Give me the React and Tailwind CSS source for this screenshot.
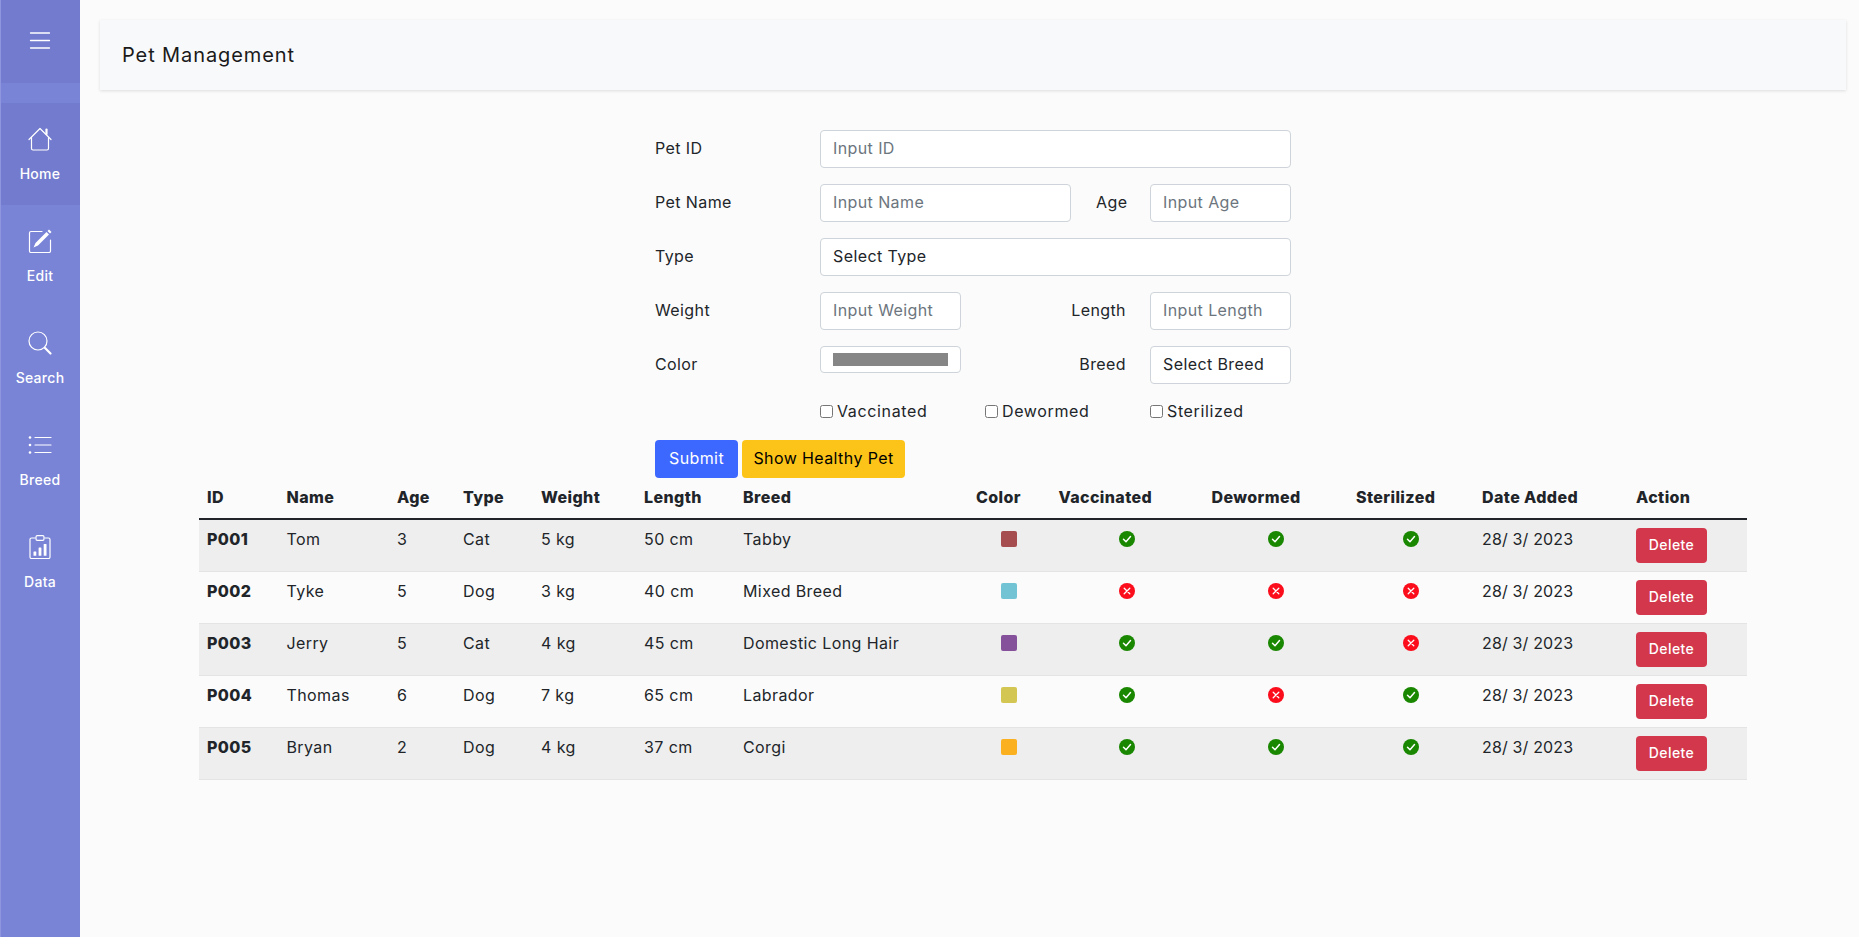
import React from "react";

const FONT = "font-['Inter','Liberation_Sans',sans-serif]";

const pets = [
  { id: "P001", name: "Tom", age: 3, type: "Cat", weight: "5 kg", length: "50 cm", breed: "Tabby", color: "bg-[#a64d4f]", v: true, d: true, s: true },
  { id: "P002", name: "Tyke", age: 5, type: "Dog", weight: "3 kg", length: "40 cm", breed: "Mixed Breed", color: "bg-[#72c4d4]", v: false, d: false, s: false },
  { id: "P003", name: "Jerry", age: 5, type: "Cat", weight: "4 kg", length: "45 cm", breed: "Domestic Long Hair", color: "bg-[#86519b]", v: true, d: true, s: false },
  { id: "P004", name: "Thomas", age: 6, type: "Dog", weight: "7 kg", length: "65 cm", breed: "Labrador", color: "bg-[#d4c653]", v: true, d: false, s: true },
  { id: "P005", name: "Bryan", age: 2, type: "Dog", weight: "4 kg", length: "37 cm", breed: "Corgi", color: "bg-[#fbb01f]", v: true, d: true, s: true },
];

const headers = ["ID", "Name", "Age", "Type", "Weight", "Length", "Breed", "Color", "Vaccinated", "Dewormed", "Sterilized", "Date Added", "Action"];
const colWidths = ["w-[79.5px]", "w-[110.5px]", "w-[66px]", "w-[78px]", "w-[103px]", "w-[99px]", "w-[233px]", "w-[82.5px]", "w-[153px]", "w-[144.5px]", "w-[126px]", "w-[154px]", "w-[119px]"];

function HomeIcon() {
  return (
    <svg viewBox="0 0 24 24" className="w-6 h-6" fill="none" stroke="white" strokeWidth="1.2" strokeLinejoin="round" strokeLinecap="round">
      <path d="M1 12.5 12 1.5 23 12.5" />
      <path d="M3.500 10.500v11a1.500 1.500 0 0 0 1.500 1.500h14a1.500 1.500 0 0 0 1.500-1.500v-11" />
      <path d="M18.500 7V2.500" strokeWidth="2.2" />
    </svg>
  );
}

function EditIcon() {
  return (
    <svg viewBox="0 0 24 24" className="w-6 h-6" fill="none" stroke="white" strokeWidth="1.2" strokeLinecap="round">
      <path d="M14 2.500H3A1.500 1.500 0 0 0 1.500 4v18A1.500 1.500 0 0 0 3 23.500h18a1.500 1.500 0 0 0 1.500-1.500V11" />
      <path d="M21 0.500 23.500 3 22 4.500 19.500 2Z" fill="white" stroke="none" />
      <path d="M18.500 3 21 5.500 10 16.500 5.500 18.500l2-4.500Z" fill="white" stroke="none" />
    </svg>
  );
}

function SearchIcon() {
  return (
    <svg viewBox="0 0 24 24" className="w-6 h-6" fill="none" stroke="white" strokeLinecap="round">
      <circle cx="10" cy="10" r="9" strokeWidth="1.2" />
      <path d="M16.800 16.800 22.500 22.500" strokeWidth="2.2" />
    </svg>
  );
}

function ListIcon() {
  return (
    <svg viewBox="0 0 24 24" className="w-6 h-6" fill="none" stroke="white" strokeWidth="1.2" strokeLinecap="round">
      <path d="M7 4.500h16M7 12h16M7 19.500h16" />
      <circle cx="2" cy="4.500" r="1.300" fill="white" stroke="none" />
      <circle cx="2" cy="12" r="1.300" fill="white" stroke="none" />
      <circle cx="2" cy="19.500" r="1.300" fill="white" stroke="none" />
    </svg>
  );
}

function DataIcon() {
  return (
    <svg viewBox="0 0 24 24" className="w-6 h-6" fill="none" stroke="white" strokeWidth="1.2" strokeLinejoin="round">
      <path d="M7.500 3H3.500A1.500 1.500 0 0 0 2 4.500V22a1.500 1.500 0 0 0 1.500 1.500h17A1.500 1.500 0 0 0 22 22V4.500A1.500 1.500 0 0 0 20.500 3H16.500" />
      <rect x="8" y="0.700" width="8" height="4.600" rx="1.300" />
      <rect x="5.500" y="16.500" width="2.800" height="4.300" rx="0.500" fill="white" stroke="none" />
      <rect x="10.600" y="12.500" width="2.800" height="8.300" rx="0.500" fill="white" stroke="none" />
      <rect x="15.700" y="9" width="2.800" height="11.800" rx="0.500" fill="white" stroke="none" />
    </svg>
  );
}

function StatusIcon({ ok }) {
  return (
    <svg viewBox="0 0 16 16" className="w-4 h-4 mx-auto mt-[3px] block">
      <circle cx="8" cy="8" r="8" fill={ok ? "#198700" : "#fb0d1b"} />
      {ok ? (
        <path d="M4.500 8.200 7 10.700 11.500 5.600" fill="none" stroke="white" strokeWidth="1.500" strokeLinecap="round" strokeLinejoin="round" />
      ) : (
        <path d="M5.200 5.200l5.600 5.600M10.800 5.200l-5.600 5.600" fill="none" stroke="white" strokeWidth="1.300" strokeLinecap="round" />
      )}
    </svg>
  );
}

function NavItem({ icon, label, active }) {
  return (
    <div className={`h-[102px] flex flex-col items-center pt-[24px] pr-px ${active ? "bg-[#727bcd]" : ""}`}>
      {icon}
      <span className="mt-[12px] text-[14px] leading-[21px] font-medium tracking-[0.02em] text-white">{label}</span>
    </div>
  );
}

function Label({ children, className = "" }) {
  return <label className={`text-[16px] leading-[36px] text-[#212529] ${className}`}>{children}</label>;
}

const fieldCls = "h-[38px] px-3 pb-[2px] text-[16px] bg-white border border-[#ced4da] rounded-[4px] flex items-center outline-none placeholder:text-[#6c757d] text-[#212529]";

function Check({ label, className = "" }) {
  return (
    <label className={`flex items-center text-[16px] leading-[21px] tracking-[0.04em] text-[#212529] ${className}`}>
      <span className="w-[13px] h-[13px] mr-[4px] rounded-[2.5px] border border-[#767676] bg-white" />
      <span className="pt-px">{label}</span>
    </label>
  );
}

function PetForm() {
  return (
    <form className="w-[636px] mx-auto pt-10">
      <div className="flex h-[54px]">
        <Label className="w-[165px]">Pet ID</Label>
        <input className={`${fieldCls} w-[471px]`} placeholder="Input ID" />
      </div>
      <div className="flex h-[54px]">
        <Label className="w-[165px]">Pet Name</Label>
        <input className={`${fieldCls} w-[251px]`} placeholder="Input Name" />
        <Label className="w-[79px] pl-[25px]">Age</Label>
        <input className={`${fieldCls} w-[141px]`} placeholder="Input Age" />
      </div>
      <div className="flex h-[54px]">
        <Label className="w-[165px]">Type</Label>
        <div className={`${fieldCls} w-[471px]`}>Select Type</div>
      </div>
      <div className="flex h-[54px]">
        <Label className="w-[165px]">Weight</Label>
        <input className={`${fieldCls} w-[141px]`} placeholder="Input Weight" />
        <Label className="w-[189px] pr-6 text-right">Length</Label>
        <input className={`${fieldCls} w-[141px]`} placeholder="Input Length" />
      </div>
      <div className="flex h-[54px]">
        <Label className="w-[165px]">Color</Label>
        <div className="w-[141px] h-[27px] px-3 py-[6px] bg-white border border-[#ced4da] rounded-[4px]">
          <div className="h-[13px] bg-[#868686]" />
        </div>
        <Label className="w-[189px] pr-6 text-right">Breed</Label>
        <div className={`${fieldCls} w-[141px]`}>Select Breed</div>
      </div>
      <div className="flex h-[40px] pl-[165px] items-start">
        <Check label="Vaccinated" className="w-[165px]" />
        <Check label="Dewormed" className="w-[165px]" />
        <Check label="Sterilized" />
      </div>
      <div className="flex gap-[4px]">
        <button type="button" className="w-[83px] h-[38px] pb-[2px] rounded-[4px] bg-[#3d68ff] text-white text-[16px]">Submit</button>
        <button type="button" className="w-[163px] h-[38px] pb-[2px] rounded-[4px] bg-[#fcc419] text-black text-[16px]">Show Healthy Pet</button>
      </div>
    </form>
  );
}

function PetTable() {
  return (
    <table className="w-[1548px] mx-auto table-fixed border-collapse text-[16px] text-[#212529]">
      <colgroup>
        {colWidths.map((w, i) => <col key={i} className={w} />)}
      </colgroup>
      <thead>
        <tr className="border-b-2 border-[#212529]">
          {headers.map((h) => (
            <th key={h} className="px-2 pt-2 pb-[10px] text-left font-extrabold leading-[22px] tracking-[0.025em]">{h}</th>
          ))}
        </tr>
      </thead>
      <tbody>
        {pets.map((p, i) => (
          <tr key={p.id} className={`border-b border-[#e4e4e4] ${i % 2 === 0 ? "bg-[#eeeeee]" : ""}`}>
            <td className="p-2 align-top leading-[22px] font-extrabold">{p.id}</td>
            <td className="p-2 align-top leading-[22px]">{p.name}</td>
            <td className="p-2 align-top leading-[22px]">{p.age}</td>
            <td className="p-2 align-top leading-[22px]">{p.type}</td>
            <td className="p-2 align-top leading-[22px]">{p.weight}</td>
            <td className="p-2 align-top leading-[22px]">{p.length}</td>
            <td className="p-2 align-top leading-[22px]">{p.breed}</td>
            <td className="p-2 align-top"><div className={`w-4 h-4 mx-auto mt-[3px] rounded-[2px] ${p.color}`} /></td>
            <td className="p-2 align-top"><StatusIcon ok={p.v} /></td>
            <td className="p-2 align-top"><StatusIcon ok={p.d} /></td>
            <td className="p-2 align-top"><StatusIcon ok={p.s} /></td>
            <td className="p-2 align-top leading-[22px] tracking-[0.01em]">28/ 3/ 2023</td>
            <td className="p-2 align-top">
              <button type="button" className="block w-[71px] h-[35px] pb-[2px] rounded-[4px] bg-[#d2374c] text-white text-[14px] font-medium">Delete</button>
            </td>
          </tr>
        ))}
      </tbody>
    </table>
  );
}

export default function App() {
  return (
    <div className={`flex min-h-[937px] bg-[#fbfbfb] tracking-[0.025em] ${FONT}`}>
      <aside className="w-20 shrink-0 bg-[#7984d6] border-l border-[#8e97dd]">
        <div className="h-[83px] bg-[#727bcd] flex items-center justify-center pb-[3px] pr-px">
          <svg viewBox="0 0 24 24" className="w-6 h-6" fill="none" stroke="white" strokeWidth="1.3" strokeLinecap="round">
            <path d="M2.500 5h19M2.500 12.500h19M2.500 20h19" />
          </svg>
        </div>
        <div className="h-[20px]" />
        <NavItem icon={<HomeIcon />} label="Home" active />
        <NavItem icon={<EditIcon />} label="Edit" />
        <NavItem icon={<SearchIcon />} label="Search" />
        <NavItem icon={<ListIcon />} label="Breed" />
        <NavItem icon={<DataIcon />} label="Data" />
      </aside>
      <main className="flex-1 pl-5 pr-[13px] pt-5">
        <div className="h-[70px] bg-[#f8f9fb] shadow-[0_1px_3px_rgba(0,0,0,0.12)] flex items-center pl-[22px] text-[20px] tracking-[0.045em] text-[#1a1a1a]">
          Pet Management
        </div>
        <PetForm />
        <PetTable />
      </main>
    </div>
  );
}
